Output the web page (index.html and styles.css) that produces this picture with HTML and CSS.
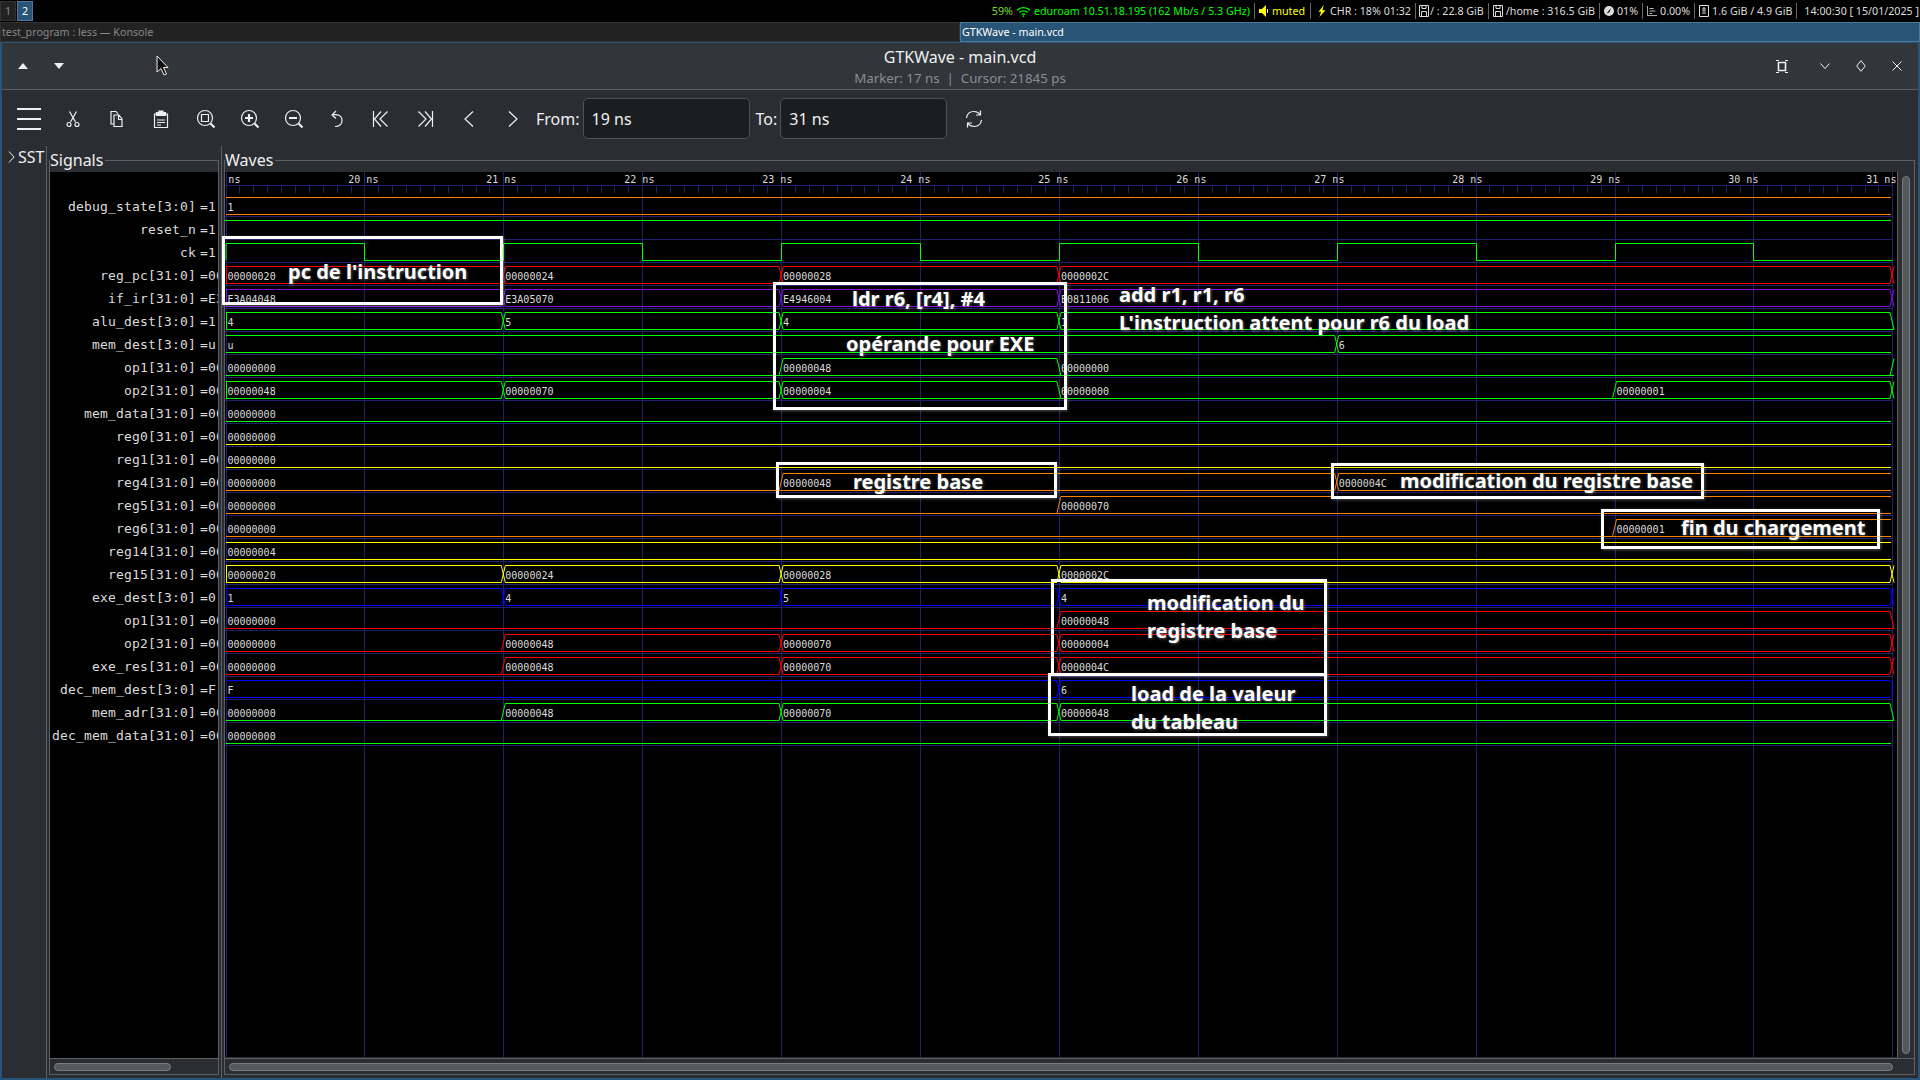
FILE: index.html
```html
<!DOCTYPE html>
<html lang="en">
<head>
    <meta charset="UTF-8">
    <title>GTKWave - main.vcd</title>
    <link rel="stylesheet" href="styles.css">
</head>
<body>
<div class="statusbar">
    <div class="workspaces">
        <span class="ws">1</span>
        <span class="ws ws-active">2</span>
    </div>
    <div class="status">
        <div class="block green"><span class="dim-green">59%</span>
            <svg class="st-icon" viewBox="0 0 16 12"><path d="M1 4.500C5 .8 11 .8 15 4.500M3.500 7C6 4.800 10 4.800 12.500 7M6 9.300C7.200 8.400 8.800 8.400 10 9.300" fill="none" stroke="currentColor" stroke-width="1.500"/><circle cx="8" cy="11" r="1" fill="currentColor"/></svg>
            <span>eduroam 10.51.18.195 (162 Mb/s / 5.3 GHz)</span></div>
        <div class="block yellow muted">
            <svg class="st-icon small" viewBox="0 0 10 12"><path d="M0 4h3l4-4v12L3 8H0z" fill="currentColor"/><path d="M8.500 4v4" stroke="currentColor"/></svg>
            <span>muted</span></div>
        <div class="block chr">
            <svg class="st-icon small yellow" viewBox="0 0 10 14"><path d="M7 0L1 8h3l-2 6 7-8H5.500z" fill="currentColor"/></svg>
            <span>CHR : 18% 01:32</span></div>
        <div class="block disk-root">
            <svg class="st-icon small" viewBox="0 0 10 12"><path d="M.5.5h9v11h-9zM3 .5v3h4v-3M2.500 6.500h5v5h-5z" fill="none" stroke="currentColor"/></svg>
            <span>/ : 22.8 GiB</span></div>
        <div class="block">
            <svg class="st-icon small" viewBox="0 0 10 12"><path d="M.5.5h9v11h-9zM3 .5v3h4v-3M2.500 6.500h5v5h-5z" fill="none" stroke="currentColor"/></svg>
            <span>/home : 316.5 GiB</span></div>
        <div class="block">
            <svg class="st-icon small" viewBox="0 0 12 12"><circle cx="6" cy="6" r="6" fill="currentColor"/><path d="M3 9L8.500 2.500 6.500 7.500z" fill="#000"/></svg>
            <span>01%</span></div>
        <div class="block">
            <svg class="st-icon small" viewBox="0 0 12 12"><path d="M.5 0v11.500H12M3 3h5M3 6h7M3 9h3" fill="none" stroke="currentColor"/></svg>
            <span>0.00%</span></div>
        <div class="block">
            <svg class="st-icon small" viewBox="0 0 10 12"><path d="M.5.5h9v11h-9zM4 3h2v3H4zM3 8h4" fill="none" stroke="currentColor"/></svg>
            <span>1.6 GiB / 4.9 GiB</span></div>
        <div class="block last"><span>14:00:30 [ 15/01/2025 ]</span></div>
    </div>
</div>

<div class="tabs">
    <div class="tab">test_program : less — Konsole</div>
    <div class="tab tab-active">GTKWave - main.vcd</div>
</div>

<div class="window">
    <header class="titlebar">
        <div class="title-left">
            <button class="tbtn"><svg width="10" height="6" viewBox="0 0 10 6"><path d="M5 0l5 6H0z" fill="#eff0f1"/></svg></button>
            <button class="tbtn"><svg width="10" height="6" viewBox="0 0 10 6"><path d="M0 0h10L5 6z" fill="#eff0f1"/></svg></button>
        </div>
        <div class="title-center">
            <div class="title">GTKWave - main.vcd</div>
            <div class="subtitle">Marker: 17 ns&nbsp; |&nbsp; Cursor: 21845 ps</div>
        </div>
        <div class="title-right">
            <button class="tbtn maxi"><svg width="12" height="13" viewBox="0 0 12 13"><path d="M2.500 2.500h7v8h-7z" fill="none" stroke="#eff0f1" stroke-width="1.600"/><path d="M0 .5h3M9 .5h3M0 12.500h3M9 12.500h3" stroke="#eff0f1"/></svg></button>
            <button class="tbtn"><svg width="10" height="6" viewBox="0 0 10 6"><path d="M.5.5L5 5.500 9.500.5" fill="none" stroke="#eff0f1"/></svg></button>
            <button class="tbtn"><svg width="10" height="12" viewBox="0 0 10 12"><path d="M5 .7L9.300 6 5 11.300.7 6z" fill="none" stroke="#eff0f1"/></svg></button>
            <button class="tbtn"><svg width="10" height="10" viewBox="0 0 10 10"><path d="M.5.5l9 9M9.500.5l-9 9" fill="none" stroke="#eff0f1"/></svg></button>
        </div>
    </header>

    <div class="toolbar">
        <button class="tool"><svg class="burger" viewBox="0 0 24 22"><path d="M0 1h24M0 11h24M0 21h24" stroke="#eff0f1" stroke-width="2"/></svg></button>
        <button class="tool"><svg viewBox="0 0 24 24"><path d="M8.500 4.500L14.500 15M15.500 4.500L9.500 15"/><circle cx="8" cy="17.500" r="2"/><circle cx="16" cy="17.500" r="2"/></svg></button>
        <button class="tool"><svg viewBox="1 0 24 24"><path d="M10 17H7V4.500h5l2 2.500M10 8h5l3 4v7.500h-8zM14.500 8v4.500H18"/></svg></button>
        <button class="tool"><svg viewBox="0 0 24 24"><path d="M5.500 7h13v13.500h-13zM8 13h8M8 15.500h8M8 18h4"/><path class="solid" d="M7.500 7.500V5.500H10V4h4v1.500h2.500v3h-9z"/></svg></button>
        <button class="tool"><svg viewBox="-1 0 24 24"><circle cx="11" cy="11" r="7.500"/><path d="M7.500 7.500h7v7h-7z"/><path class="thick" d="M16.500 16.500l4 4"/></svg></button>
        <button class="tool"><svg viewBox="-1 0 24 24"><circle cx="11" cy="11" r="7.500"/><path class="thick" d="M7 11h8M11 7v8M16.500 16.500l4 4"/></svg></button>
        <button class="tool"><svg viewBox="-1 0 24 24"><circle cx="11" cy="11" r="7.500"/><path class="thick" d="M7 11h8M16.500 16.500l4 4"/></svg></button>
        <button class="tool"><svg viewBox="-1 0 24 24"><path d="M10 4L6 8l4 3.500M6 8c5-1 10 0 10 5.500 0 4-3 6-7 6"/></svg></button>
        <button class="tool"><svg viewBox="0 0 24 24"><path d="M4.500 4v16M12 4.500L5.500 12l6.500 7.500M18.500 4.500L11 12l7.500 7.500"/></svg></button>
        <button class="tool"><svg viewBox="0 0 24 24"><path d="M19.500 4v16M12 4.500l6.500 7.500-6.500 7.500M5.500 4.500L13 12l-7.500 7.500"/></svg></button>
        <button class="tool"><svg viewBox="0 0 24 24"><path d="M16 4.500L8 12l8 7.500"/></svg></button>
        <button class="tool"><svg viewBox="0 0 24 24"><path d="M8 4.500l8 7.500-8 7.500"/></svg></button>
        <label class="range-label">From:</label>
        <input class="range-entry" type="text" value="19 ns">
        <label class="range-label to">To:</label>
        <input class="range-entry" type="text" value="31 ns">
        <button class="tool reload"><svg viewBox="0 0 24 24"><path d="M4.500 11C5 7 8 4.500 12 4.500c2.500 0 4.500 1 6 3M19.500 13c-.5 4-3.500 6.500-7.500 6.500-2.500 0-4.500-1-6-3M18.500 3.500v4.500H14M5.500 20.500V16H10"/></svg></button>
    </div>

    <div class="main">
        <aside class="sst">
            <svg width="7" height="12" viewBox="0 0 7 12"><path d="M1 .5L6 6l-5 5.500" fill="none" stroke="#eff0f1"/></svg>
            <span>SST</span>
        </aside>

        <section class="pane signals-pane">
            <div class="frame">
                <span class="frame-label">Signals</span>
                <div class="signals">
                    <div class="sig"><span class="sig-name">debug_state[3:0]</span><span class="sig-val">=1</span></div>
                    <div class="sig"><span class="sig-name">reset_n</span><span class="sig-val">=1</span></div>
                    <div class="sig"><span class="sig-name">ck</span><span class="sig-val">=1</span></div>
                    <div class="sig"><span class="sig-name">reg_pc[31:0]</span><span class="sig-val">=00000020</span></div>
                    <div class="sig"><span class="sig-name">if_ir[31:0]</span><span class="sig-val">=E3A04048</span></div>
                    <div class="sig"><span class="sig-name">alu_dest[3:0]</span><span class="sig-val">=1</span></div>
                    <div class="sig"><span class="sig-name">mem_dest[3:0]</span><span class="sig-val">=u</span></div>
                    <div class="sig"><span class="sig-name">op1[31:0]</span><span class="sig-val">=00000000</span></div>
                    <div class="sig"><span class="sig-name">op2[31:0]</span><span class="sig-val">=00000048</span></div>
                    <div class="sig"><span class="sig-name">mem_data[31:0]</span><span class="sig-val">=00000000</span></div>
                    <div class="sig"><span class="sig-name">reg0[31:0]</span><span class="sig-val">=00000000</span></div>
                    <div class="sig"><span class="sig-name">reg1[31:0]</span><span class="sig-val">=00000000</span></div>
                    <div class="sig"><span class="sig-name">reg4[31:0]</span><span class="sig-val">=00000000</span></div>
                    <div class="sig"><span class="sig-name">reg5[31:0]</span><span class="sig-val">=00000000</span></div>
                    <div class="sig"><span class="sig-name">reg6[31:0]</span><span class="sig-val">=00000000</span></div>
                    <div class="sig"><span class="sig-name">reg14[31:0]</span><span class="sig-val">=00000004</span></div>
                    <div class="sig"><span class="sig-name">reg15[31:0]</span><span class="sig-val">=00000020</span></div>
                    <div class="sig"><span class="sig-name">exe_dest[3:0]</span><span class="sig-val">=0</span></div>
                    <div class="sig"><span class="sig-name">op1[31:0]</span><span class="sig-val">=00000000</span></div>
                    <div class="sig"><span class="sig-name">op2[31:0]</span><span class="sig-val">=00000000</span></div>
                    <div class="sig"><span class="sig-name">exe_res[31:0]</span><span class="sig-val">=00000000</span></div>
                    <div class="sig"><span class="sig-name">dec_mem_dest[3:0]</span><span class="sig-val">=F</span></div>
                    <div class="sig"><span class="sig-name">mem_adr[31:0]</span><span class="sig-val">=00000000</span></div>
                    <div class="sig"><span class="sig-name">dec_mem_data[31:0]</span><span class="sig-val">=00000000</span></div>
                </div>
                <div class="hscroll"><div class="thumb sig-thumb"></div></div>
            </div>
        </section>

        <section class="pane waves-pane">
            <div class="frame">
                <span class="frame-label">Waves</span>
                <div class="wave-row">
                    <svg id="waves" class="waves" viewBox="225 172 1672 885"></svg>
                    <div class="vscroll"><div class="thumb vthumb"></div></div>
                </div>
                <div class="hscroll"><div class="thumb wave-thumb"></div></div>
            </div>
        </section>
    </div>
</div>

<!-- annotations drawn on top of the capture -->
<div class="notes">
    <div class="box box-pc"></div>
    <div class="box box-ldr"></div>
    <div class="box box-base"></div>
    <div class="box box-modif"></div>
    <div class="box box-fin"></div>
    <div class="box box-exe"></div>
    <div class="box box-load"></div>
    <span class="note n-pc">pc de l'instruction</span>
    <span class="note n-ldr">ldr r6, [r4], #4</span>
    <span class="note n-oper">opérande pour EXE</span>
    <span class="note n-add">add r1, r1, r6</span>
    <span class="note n-wait">L'instruction attent pour r6 du load</span>
    <span class="note n-base">registre base</span>
    <span class="note n-modif">modification du registre base</span>
    <span class="note n-fin">fin du chargement</span>
    <span class="note n-exe1">modification du</span>
    <span class="note n-exe2">registre base</span>
    <span class="note n-load1">load de la valeur</span>
    <span class="note n-load2">du tableau</span>
</div>

<svg class="pointer" width="13" height="21" viewBox="0 0 13 21"><path d="M1 1v16l4-3.500 3 6.500 2.500-1-3-6.500H12z" fill="#111" stroke="#eee"/></svg>

<script src="script.js"></script>
</body>
</html>
```

FILE: styles.css
```css
html {
    font-family: "Noto Sans", sans-serif;
}
body {
    margin: 0;
    width: 1920px;
    height: 1080px;
    overflow: hidden;
    background-color: black;
    display: flex;
    flex-direction: column;
    color: #eff0f1;
}
button {
    background: none;
    border: none;
    padding: 0;
    color: inherit;
    display: flex;
    align-items: center;
    justify-content: center;
}

/* i3 bar */
.statusbar {
    height: 22px;
    display: flex;
    justify-content: space-between;
    font-size: 10.7px;
    color: #ddd;
}
.workspaces {
    display: flex;
    gap: 1px;
    padding-top: 1px;
}
.ws {
    width: 16px;
    height: 20px;
    box-sizing: border-box;
    background-color: #222;
    border: 1px solid #333;
    color: #888;
    text-align: center;
    line-height: 18px;
}
.ws-active {
    background-color: #285577;
    border-color: #4c7899;
    color: #fff;
}
.status {
    display: flex;
    align-items: center;
    padding-right: 1px;
    white-space: nowrap;
}
.block {
    display: flex;
    align-items: center;
    height: 16px;
    gap: 3px;
    padding: 0 4px;
    border-right: 1px solid #666;
}
.block.muted {
    padding-right: 5px;
}
.block.chr {
    padding-left: 6px;
}
.block.disk-root {
    padding-left: 3px;
    gap: 1px;
}
.block.last {
    border-right: none;
    padding: 0 0 0 7px;
}
.green {
    color: #00ff00;
}
.dim-green {
    color: #7fdc30;
}
.yellow {
    color: #ffff00;
}
.st-icon {
    width: 15px;
    height: 11px;
}
.st-icon.small {
    width: 10px;
    height: 12px;
}

/* i3 tabs */
.tabs {
    height: 20px;
    display: flex;
    font-size: 10.7px;
}
.tab {
    flex: 1;
    box-sizing: border-box;
    background-color: #222;
    border: 1px solid #333;
    color: #888;
    padding-left: 1px;
    line-height: 18px;
}
.tab-active {
    background-color: #285577;
    border-color: #4c7899;
    color: #fff;
}

/* gtk window */
.window {
    flex: 1;
    min-height: 0;
    display: flex;
    flex-direction: column;
    border: 2px solid #285577;
    border-top-width: 1px;
    background-color: #2a2e32;
}
.titlebar {
    height: 47px;
    box-sizing: border-box;
    display: grid;
    grid-template-columns: 1fr auto 1fr;
    align-items: center;
    background-color: #31363b;
    border-bottom: 1px solid #5c6064;
}
.title-left {
    display: flex;
    padding-left: 3px;
}
.title-right {
    display: flex;
    justify-content: flex-end;
    padding-right: 3px;
}
.tbtn {
    width: 36px;
    height: 36px;
}
.maxi {
    margin-right: 7px;
}
.title-center {
    text-align: center;
    padding-top: 2px;
}
.title {
    font-size: 16px;
    line-height: 21px;
}
.subtitle {
    font-size: 13.3px;
    line-height: 20px;
    color: #8a8e92;
}
.toolbar {
    height: 56px;
    display: flex;
    align-items: center;
    padding-left: 5px;
    font-size: 16px;
}
.tool {
    width: 44px;
    height: 44px;
}
.tool svg {
    width: 24px;
    height: 24px;
    margin-top: 1px;
    fill: none;
    stroke: #eff0f1;
    stroke-width: 1.2;
}
.tool svg.burger {
    height: 22px;
}
.tool .thick {
    stroke-width: 2.2;
}
.tool .solid {
    fill: #eff0f1;
}
.range-label {
    margin-left: 1px;
    margin-right: 3px;
    padding-top: 1px;
}
.range-label.to {
    margin-left: 6px;
}
.range-entry {
    width: 167px;
    height: 41px;
    box-sizing: border-box;
    background-color: #1b1e20;
    border: 1px solid #4d5257;
    border-radius: 5px;
    color: #eff0f1;
    font: 16px "Noto Sans", sans-serif;
    padding: 1px 8px 0;
}
.reload {
    margin-left: 5px;
}

/* panes */
.main {
    flex: 1;
    min-height: 0;
    display: flex;
}
.sst {
    width: 44px;
    flex: none;
    border-right: 1px solid #5c6064;
    display: flex;
    align-items: flex-start;
    gap: 3px;
    font-size: 16px;
    line-height: 22px;
}
.sst svg {
    margin: 5px 0 0 6px;
}
.pane {
    display: flex;
    padding: 14px 0 3px 2px;
}
.signals-pane {
    width: 170px;
    flex: none;
    padding-right: 2px;
    border-right: 1px solid #5c6064;
}
.waves-pane {
    flex: 1;
    min-width: 0;
    padding-right: 3px;
}
.frame {
    flex: 1;
    min-width: 0;
    position: relative;
    display: flex;
    flex-direction: column;
    border: 1px solid #5c6064;
    padding-top: 11px;
}
.frame-label {
    position: absolute;
    left: 0;
    top: -13px;
    padding-right: 2px;
    background-color: #2a2e32;
    font-size: 16px;
    line-height: 24px;
}

/* signal names */
.signals {
    flex: 1;
    min-height: 0;
    background-color: black;
    padding-top: 23px;
    font: 13px "DejaVu Sans Mono", monospace;
    letter-spacing: 0.17px;
    color: #dcdcdc;
}
.sig {
    height: 23px;
    display: flex;
    line-height: 24px;
    white-space: pre;
}
.sig-name {
    width: 146px;
    flex: none;
    text-align: right;
}
.sig-val {
    flex: 1;
    min-width: 0;
    margin-left: 4px;
    overflow: hidden;
}

/* wave view */
.wave-row {
    flex: 1;
    min-height: 0;
    display: flex;
}
.waves {
    width: 1672px;
    height: 885px;
    flex: none;
    background-color: black;
}
.wave-line {
    fill: none;
    stroke-width: 1;
}
.grid {
    stroke: #20206e;
    stroke-width: 1;
    fill: none;
}
.wave-text {
    font: 10px "DejaVu Sans Mono", monospace;
    fill: #dcdcdc;
}
.vscroll {
    flex: 1;
    border-left: 1px solid #5c6064;
    display: flex;
    justify-content: center;
    padding: 4px 0;
}
.hscroll {
    height: 16px;
    flex: none;
    box-sizing: border-box;
    border-top: 1px solid #5c6064;
    padding-top: 4px;
}
.thumb {
    box-sizing: border-box;
    background-color: #55595c;
    border: 1px solid #797c7f;
    border-radius: 5px;
}
.sig-thumb {
    width: 117px;
    height: 8px;
    margin-left: 4px;
}
.wave-thumb {
    width: 1664px;
    height: 8px;
    margin-left: 4px;
}
.vthumb {
    width: 8px;
}

/* annotations over the capture */
.notes {
    position: absolute;
    left: 0;
    top: 0;
}
.box {
    position: absolute;
    box-sizing: border-box;
    border: 3px solid white;
    box-shadow: 1px 1px 3px rgba(255, 255, 255, 0.3);
}
.box-pc { left: 222px; top: 236px; width: 281px; height: 69px; }
.box-ldr { left: 773px; top: 282px; width: 294px; height: 128px; }
.box-base { left: 776px; top: 462px; width: 281px; height: 36px; }
.box-modif { left: 1331px; top: 463px; width: 373px; height: 36px; }
.box-fin { left: 1601px; top: 509px; width: 279px; height: 40px; }
.box-exe { left: 1051px; top: 579px; width: 276px; height: 97px; }
.box-load { left: 1048px; top: 673px; width: 279px; height: 63px; }
.note {
    position: absolute;
    font-size: 20px;
    font-weight: 700;
    line-height: 26px;
    color: white;
    white-space: nowrap;
    text-shadow: 1px 1px 3px rgba(255, 255, 255, 0.35);
}
.n-pc { left: 288px; top: 259px; }
.n-ldr { left: 852px; top: 286px; }
.n-oper { left: 846px; top: 331px; }
.n-add { left: 1119px; top: 282px; }
.n-wait { left: 1119px; top: 310px; }
.n-base { left: 853px; top: 469px; }
.n-modif { left: 1400px; top: 468px; }
.n-fin { left: 1681px; top: 515px; }
.n-exe1 { left: 1147px; top: 590px; }
.n-exe2 { left: 1147px; top: 618px; }
.n-load1 { left: 1131px; top: 681px; }
.n-load2 { left: 1131px; top: 709px; }
.pointer {
    position: absolute;
    left: 156px;
    top: 55px;
}
```

FILE: script.js
```js
// draws the ruler, grid and traces into the #waves svg (page coordinates)
var GREEN = '#00ff00', RED = '#ff0000', BLUE = '#0000ff';
var YELLOW = '#ffff00', ORANGE = '#ff8000', PURPLE = '#8010e0';

var rows = [
    { c: ORANGE, v: [[19, '1']] },
    { c: GREEN, high: true },
    { c: GREEN, clock: true },
    { c: RED, start: true, end: 'x', v: [[19, '00000020'], [21, '00000024'], [23, '00000028'], [25, '0000002C']] },
    { c: PURPLE, start: true, end: 'x', v: [[19, 'E3A04048'], [21, 'E3A05070'], [23, 'E4946004'], [25, 'E0811006']] },
    { c: GREEN, start: true, end: 'f', v: [[19, '4'], [21, '5'], [23, '4'], [25, '1']] },
    { c: GREEN, v: [[19, 'u'], [27, '6']] },
    { c: GREEN, end: 'r', v: [[19, '00000000'], [23, '00000048'], [25, '00000000']] },
    { c: GREEN, start: true, end: 'x', v: [[19, '00000048'], [21, '00000070'], [23, '00000004'], [25, '00000000'], [29, '00000001']] },
    { c: GREEN, v: [[19, '00000000']] },
    { c: YELLOW, v: [[19, '00000000']] },
    { c: YELLOW, v: [[19, '00000000']] },
    { c: ORANGE, v: [[19, '00000000'], [23, '00000048'], [27, '0000004C']] },
    { c: ORANGE, v: [[19, '00000000'], [25, '00000070']] },
    { c: ORANGE, v: [[19, '00000000'], [29, '00000001']] },
    { c: YELLOW, v: [[19, '00000004']] },
    { c: YELLOW, start: true, end: 'x', v: [[19, '00000020'], [21, '00000024'], [23, '00000028'], [25, '0000002C']] },
    { c: BLUE, start: true, end: 'x', v: [[19, '1'], [21, '4'], [23, '5'], [25, '4']] },
    { c: RED, end: 'f', v: [[19, '00000000'], [25, '00000048']] },
    { c: RED, end: 'x', v: [[19, '00000000'], [21, '00000048'], [23, '00000070'], [25, '00000004']] },
    { c: RED, end: 'x', v: [[19, '00000000'], [21, '00000048'], [23, '00000070'], [25, '0000004C']] },
    { c: BLUE, end: 'v', v: [[19, 'F'], [25, '6']] },
    { c: GREEN, end: 'f', v: [[19, '00000000'], [21, '00000048'], [23, '00000070'], [25, '00000048']] },
    { c: GREEN, v: [[19, '00000000']] }
];

function T(ns) {
    return 225.5 + 138.9 * (ns - 19);
}
function rowTop(i) {
    return 197.5 + 23 * i;
}
function line(d, color) {
    return '<path class="wave-line" d="' + d + '" stroke="' + color + '"/>';
}
function isZero(text) {
    return text === '00000000';
}
function crossing(x, top, bot, fromZero, toZero) {
    var a = fromZero ? bot : top;
    var b = toZero ? bot : top;
    return 'M' + (x - 2) + ' ' + a + 'L' + (x + 2) + ' ' + bot +
           'M' + (x - 2) + ' ' + bot + 'L' + (x + 2) + ' ' + b;
}

function drawGrid() {
    var out = '', d = '', ticks = '';
    for (var i = 0; i < 24; i++) {
        d += 'M225 ' + (rowTop(i) + 19) + 'H1893';
    }
    for (var ns = 19; ns <= 31; ns++) {
        var x = Math.round(T(ns)) + 0.5;
        d += 'M' + x + ' 172V1057';
        if (ns < 31) {
            for (var k = 1; k < 10; k++) {
                var tx = Math.round(T(ns) + 13.89 * k) + 0.5;
                ticks += 'M' + tx + ' 185V193';
            }
        }
        out += '<text class="wave-text" x="' + (348.3 + 138 * (ns - 20)) + '" y="183">' + ns + ' ns</text>';
    }
    return '<path class="grid" d="M225 185.5H1893' + ticks + d + '"/>' + out;
}

function drawClock(i, row) {
    var top = rowTop(i), bot = top + 17;
    var d = 'M226 ' + bot + 'V' + top;
    for (var ns = 20; ns <= 30; ns += 2) {
        var fall = Math.round(T(ns)) + 0.5;
        var rise = Math.round(T(ns + 1)) + 0.5;
        d += 'H' + fall + 'V' + bot + 'H' + rise;
        if (ns < 30) d += 'V' + top;
    }
    return line(d, row.c);
}

function drawBus(i, row) {
    var top = rowTop(i), bot = top + 17;
    var d = '', text = '';
    for (var k = 0; k < row.v.length; k++) {
        var seg = row.v[k], next = row.v[k + 1];
        var zero = isZero(seg[1]);
        var x0 = k === 0 ? 226 : T(seg[0]) + 2;
        var x1 = next ? T(next[0]) - 2 : (row.end ? 1890 : 1891);
        if (!zero) d += 'M' + x0 + ' ' + top + 'H' + x1;
        d += 'M' + x0 + ' ' + bot + 'H' + x1;
        if (next) d += crossing(T(next[0]), top, bot, zero, isZero(next[1]));
        text += '<text class="wave-text" x="' + (T(seg[0]) + 2) + '" y="' + (top + 13) + '">' + seg[1] + '</text>';
    }
    if (row.start) d += 'M226.5 ' + top + 'V' + bot;
    var last = isZero(row.v[row.v.length - 1][1]);
    if (row.end === 'v') d += 'M1892 ' + top + 'V' + bot;
    if (row.end === 'x') d += crossing(1892, top, bot, last, false);
    if (row.end === 'f') d += crossing(1892, top, bot, last, true);
    if (row.end === 'r') d += crossing(1892, top, bot, true, false);
    return line(d, row.c) + text;
}

function drawWaves() {
    var html = drawGrid();
    rows.forEach(function (row, i) {
        if (row.high) {
            html += line('M225 ' + rowTop(i) + 'H1891', row.c);
        } else if (row.clock) {
            html += drawClock(i, row);
        } else {
            html += drawBus(i, row);
        }
    });
    document.getElementById('waves').innerHTML = html;
}

drawWaves();
```
